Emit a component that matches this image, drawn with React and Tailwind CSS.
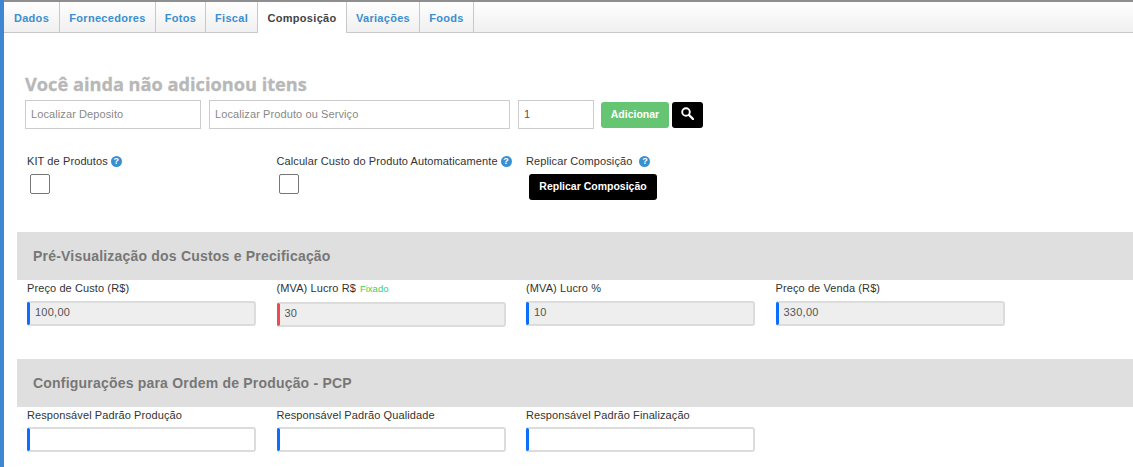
const tabs = [
  { label: "Dados", w: "w-[56px]" },
  { label: "Fornecedores", w: "w-[96px]" },
  { label: "Fotos", w: "w-[50px]" },
  { label: "Fiscal", w: "w-[52px]" },
  { label: "Composição", w: "w-[89px]", active: true },
  { label: "Variações", w: "w-[73px]" },
  { label: "Foods", w: "w-[54px]" },
]

function Help({ className = "" }) {
  return (
    <span className={`inline-flex w-[11px] h-[11px] rounded-full bg-[#3a8fcf] text-white text-[9px] font-bold items-center justify-center leading-none ${className}`}>
      ?
    </span>
  )
}

function SearchIcon() {
  return (
    <svg width="13" height="13" viewBox="0 0 13 13" fill="none" className="relative -top-px">
      <circle cx="5" cy="5" r="3.8" stroke="white" strokeWidth="1.9" />
      <path d="M8 8l4 4" stroke="white" strokeWidth="2.4" strokeLinecap="round" />
    </svg>
  )
}

function Field({ label, value, accent = "border-l-[#0d6efd]", disabled = true, extra, top = "mt-[6px]" }) {
  return (
    <div className="w-[249.5px] shrink-0 pl-[10px]">
      <div className="h-[14px] text-[11px] leading-[14px] tracking-[0.1px] text-[#333] whitespace-nowrap">
        {label}
        {extra && <span className="ml-1 text-[9.5px] tracking-normal text-[#3fcf5a]">{extra}</span>}
      </div>
      <div
        className={`${top} w-[229px] h-[25px] rounded-[3px] border-2 border-[#dcdcdc] border-l-[3px] ${accent} pl-[5px] text-[11px] leading-[19px] tracking-[0.25px] text-[#555] ${disabled ? "bg-[#eeeeee]" : "bg-white"}`}
      >
        {value}
      </div>
    </div>
  )
}

function SectionTitle({ children }) {
  return (
    <div className="ml-[13px] h-[48px] bg-[#dfdfdf] pl-[16px] text-[14px] leading-[48px] font-bold tracking-[0.2px] text-[#777]">
      {children}
    </div>
  )
}

export default function App() {
  return (
    <div className="w-[1133px] h-[467px] overflow-hidden bg-white border-l-4 border-l-[#3f87d2] font-['Liberation_Sans',Arial,sans-serif]">
      <div className="h-[2px] bg-[#8f8f8f]" />

      {/* Abas */}
      <div className="flex h-[31px] border-b border-[#c8c8c8] bg-gradient-to-b from-white to-[#f0f0f0]">
        {tabs.map((tab) => (
          <div
            key={tab.label}
            className={`${tab.w} h-[31px] border-r border-[#c8c8c8] text-center text-[11px] leading-[32px] font-bold tracking-[0.3px] ${
              tab.active ? "bg-white text-[#444]" : "text-[#3a8fcf]"
            }`}
          >
            {tab.label}
          </div>
        ))}
      </div>

      <div className="pl-[21px] pt-[39px] h-[28px] box-content">
        <h2 className="text-[18.2px] leading-[24px] font-bold text-[#b8b8b8] [-webkit-text-stroke:0.3px_#b8b8b8] font-['Open_Sans',sans-serif]">
          Você ainda não adicionou itens
        </h2>
      </div>

      {/* Busca */}
      <div className="flex items-center pl-[21px]">
        <div className="w-[176px] h-[29px] border border-[#cccccc] pl-[5px] text-[11px] leading-[27px] tracking-[0.1px] text-[#888]">
          Localizar Deposito
        </div>
        <div className="ml-[8px] w-[301px] h-[29px] border border-[#cccccc] pl-[5px] text-[11px] leading-[27px] tracking-[0.1px] text-[#888]">
          Localizar Produto ou Serviço
        </div>
        <div className="ml-[8px] w-[76px] h-[29px] border border-[#cccccc] pl-[5px] text-[11px] leading-[27px] text-[#555]">
          1
        </div>
        <button className="ml-[7px] w-[68px] h-[26px] rounded-[3px] bg-[#66c573] text-white text-[10.5px] font-bold">
          Adicionar
        </button>
        <button className="ml-[3px] w-[31px] h-[26px] rounded-[3px] bg-black text-white flex items-center justify-center">
          <SearchIcon />
        </button>
      </div>

      {/* Opções */}
      <div className="flex pl-[13px] mt-[25px] h-[78px]">
        <div className="w-[249.5px] pl-[10px]">
          <div className="h-[14px] text-[11px] leading-[14px] tracking-[0.1px] text-[#333] flex items-center gap-[3px]">
            KIT de Produtos <Help />
          </div>
          <div className="mt-[6px] ml-[3px] w-[20px] h-[20px] rounded-[2px] border border-[#777] bg-white" />
        </div>
        <div className="w-[249.5px] pl-[10px]">
          <div className="h-[14px] text-[11px] leading-[14px] tracking-[0.1px] text-[#333] flex items-center gap-[3px] whitespace-nowrap">
            Calcular Custo do Produto Automaticamente <Help />
          </div>
          <div className="mt-[6px] ml-[2px] w-[20px] h-[20px] rounded-[2px] border border-[#777] bg-white" />
        </div>
        <div className="w-[249.5px] pl-[10px]">
          <div className="h-[14px] text-[11px] leading-[14px] tracking-[0.1px] text-[#333] flex items-center gap-[7px] whitespace-nowrap">
            Replicar Composição <Help />
          </div>
          <button className="block mt-[6px] ml-[3px] w-[128px] h-[26px] rounded-[3px] bg-black text-white text-[10.5px] font-bold">
            Replicar Composição
          </button>
        </div>
      </div>

      <SectionTitle>Pré-Visualização dos Custos e Precificação</SectionTitle>

      <div className="flex pl-[13px] pt-px h-[79px]">
        <Field label="Preço de Custo (R$)" value="100,00" />
        <Field label="(MVA) Lucro R$" extra="Fixado" value="30" accent="border-l-[#ef4a52]" top="mt-[7px]" />
        <Field label="(MVA) Lucro %" value="10" />
        <Field label="Preço de Venda (R$)" value="330,00" />
      </div>

      <SectionTitle>Configurações para Ordem de Produção - PCP</SectionTitle>

      <div className="flex pl-[13px] pt-px">
        <Field label="Responsável Padrão Produção" value="" disabled={false} top="mt-[5px]" />
        <Field label="Responsável Padrão Qualidade" value="" disabled={false} top="mt-[5px]" />
        <Field label="Responsável Padrão Finalização" value="" disabled={false} top="mt-[5px]" />
      </div>
    </div>
  )
}
